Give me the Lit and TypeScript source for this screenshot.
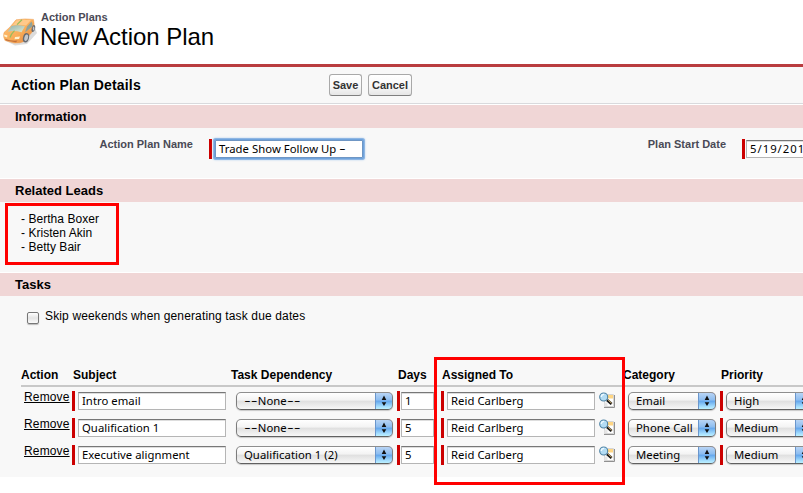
import { LitElement, html, css } from "lit";
import { customElement, property } from "lit/decorators.js";

/* Sets runs of dashes wider than the words around them. */
const dashed = (value: string) =>
  value.split(/(-+)/).map((part) => (part.startsWith("-") ? html`<span class="dash">${part}</span>` : part));

const fieldText = css`
  .text {
    font: 11.3px/16px "Noto Sans", "Open Sans", sans-serif;
    letter-spacing: var(--tracking, 0.04px);
    color: #000;
    white-space: pre;
  }
  .dash {
    display: inline-block;
    font-family: Inter, sans-serif;
    letter-spacing: -0.1px;
    font-feature-settings: "calt" 0;
    line-height: 15px;
    transform: scaleX(1.32);
    transform-origin: left;
    margin-right: 0.32em;
  }
`;

@customElement("text-field")
class TextField extends LitElement {
  @property() value = "";
  @property({ type: Boolean }) required = false;
  @property({ type: Boolean, reflect: true }) focused = false;
  static styles = [
    fieldText,
    css`
      :host { display: flex; height: 20px; }
      .bar { flex: none; width: 3px; height: 20px; background: #c00; margin-right: var(--gap, 3px); }
      .box {
        box-sizing: border-box; flex: 1; height: 18px; margin-top: 1px; padding-left: 3px;
        border: 1px solid #b5b5b5; border-top: 1px solid #777; background: #fff;
        box-shadow: inset 0 1px 0 #ddd; overflow: hidden;
      }
      :host([focused]) .box {
        border: 1px solid #6f96c4; border-radius: 1px;
        box-shadow: 0 0 0 1px #6fa3dc, 0 0 0 2px #8fb6e3, 0 0 2px 2px #a9c9ec;
      }
    `,
  ];
  render() {
    return html`${this.required ? html`<div class="bar"></div>` : ""}
      <div class="box text">${dashed(this.value)}</div>`;
  }
}

@customElement("pop-up")
class PopUp extends LitElement {
  @property() value = "";
  static styles = [
    fieldText,
    css`
      :host { display: block; height: 20px; padding-top: 1px; box-sizing: border-box; }
      .box {
        box-sizing: border-box; display: flex; height: 18px; overflow: hidden;
        border: 1px solid #7c7c7c; border-top-color: #8e8e8e; border-bottom-color: #606060; border-radius: 5px;
        background: linear-gradient(#fff 0, #f3f3f3 45%, #dfdfdf 50%, #f7f7f7 100%);
        box-shadow: 0 1px 1px #c8c8c8;
      }
      .text { flex: 1; padding-left: 7px; overflow: hidden; }
      .arrows {
        flex: none; width: 18px; margin: -1px; height: 18px; box-sizing: border-box;
        border: 1px solid #3c61a5; border-top-color: #283b9b; border-left-color: #6a96cc; border-radius: 0 5px 5px 0;
        background: linear-gradient(#b9d5f5 0, #8bbcf0 45%, #62a5ec 50%, #a5defe 85%, #bdf1ff 100%);
      }
      svg { display: block; }
    `,
  ];
  render() {
    return html`<div class="box">
      <div class="text">${dashed(this.value)}</div>
      <div class="arrows">
        <svg width="16" height="16" viewBox="0 0 16 16"><path d="M8 2.6 10.3 7H5.7zM8 13 5.7 9.2h4.6z" fill="#111" /></svg>
      </div>
    </div>`;
  }
}

const lookupIcon = html`<svg class="lookup" width="17" height="17" viewBox="0 0 17 17">
  <path d="M5.5 2.5h9v12h-9z" fill="#fff" stroke="#d5d5d5" />
  <path d="M5 15.5h10.5V3" fill="none" stroke="#909090" />
  <path d="M7 3h7v3.5H7z" fill="#ffd684" />
  <path d="M5.5 10.5h3v3.5h-3z" fill="#e6e6e6" />
  <path d="M8 8 12.6 12" stroke="#1d1d1d" stroke-width="2.8" />
  <path d="M9.2 8.2 12.6 11.2" stroke="#e0b96f" stroke-width="1" />
  <circle cx="4.7" cy="5" r="4" fill="#b3dcf4" stroke="#4f83a5" stroke-width="1.1" />
  <path d="M2.3 5A2.6 2.6 0 0 1 5.2 2.4" stroke="#effaff" stroke-width="1.4" fill="none" />
</svg>`;

const carIcon = html`<svg class="car" width="34" height="32" viewBox="0 0 34 32">
  <defs>
    <linearGradient id="body" x1="0" y1="0" x2="1" y2="1">
      <stop offset="0" stop-color="#ffc37a" /><stop offset=".55" stop-color="#f9ad58" /><stop offset="1" stop-color="#e0803a" />
    </linearGradient>
    <linearGradient id="glass" x1="0" y1="0" x2="1" y2="1">
      <stop offset="0" stop-color="#8fb2b0" /><stop offset="1" stop-color="#dfe8cf" />
    </linearGradient>
  </defs>
  <path d="M3 24 12 28.5 24 27 34 16 32 11 10 23z" fill="#8a8a8a" opacity=".3" />
  <path d="M13 2.8Q22 1.2 30.5 2.4 31.5 7 31 13L27 17.5 21 24.5Q17 26.5 11 26L2 23.5Q-.2 20 1 15.5L7 10z" fill="url(#body)" stroke="#ec9d52" stroke-width=".5" />
  <path d="M13.5 3.4Q20 2.2 28 3L23 8.5Q14 7 9.5 8.4z" fill="#ffc98a" />
  <path d="M8.4 9Q15 7.2 22 9.2L18.5 15.2Q11 13.2 4.8 14.8z" fill="url(#glass)" />
  <path d="M24 9.5 28.5 4.5Q30 6.5 29.2 9.5L22 15.5z" fill="#8fa29a" />
  <path d="M19 2.8 14 7.6M11.5 13.6Q8 17 7 20.5" stroke="#96bd5c" stroke-width="1.2" fill="none" />
  <path d="M1.3 17.5 4.5 18.5 4 20.5 1.2 19.3zM12 20 17 19.6 16 22 11.5 22.3z" fill="#fff3cf" />
  <path d="M2 21.8Q8 24.3 14.5 23.6L13 25.3 3 23.5z" fill="#c2703a" />
  <ellipse cx="23" cy="20.8" rx="3" ry="4.8" transform="rotate(14 23 20.8)" fill="#686b71" />
  <ellipse cx="23.2" cy="20.8" rx="1.8" ry="3.3" transform="rotate(14 23.2 20.8)" fill="#c4c7cb" />
  <ellipse cx="30.4" cy="11.5" rx="1.7" ry="3.6" transform="rotate(12 30.4 11.5)" fill="#686b71" />
  <ellipse cx="30.6" cy="11.5" rx=".8" ry="2.1" fill="#c4c7cb" />
</svg>`;

const leads = ["Bertha Boxer", "Kristen Akin", "Betty Bair"];
const headings = ["Action", "Subject", "Task Dependency", "Days", "Assigned To", "Category", "Priority"];
const tasks = [
  { subject: "Intro email", dependency: "--None--", days: "1", owner: "Reid Carlberg", category: "Email", priority: "High" },
  { subject: "Qualification 1", dependency: "--None--", days: "5", owner: "Reid Carlberg", category: "Phone Call", priority: "Medium" },
  { subject: "Executive alignment", dependency: "Qualification 1 (2)", days: "5", owner: "Reid Carlberg", category: "Meeting", priority: "Medium" },
];

@customElement("app-root")
class AppRoot extends LitElement {
  static styles = css`
    :host {
      display: block; position: relative; width: 803px; height: 493px; overflow: hidden;
      background: #fff; color: #000; font: 12px/14px "Liberation Sans", Arial, sans-serif;
    }
    header { display: flex; height: 64px; box-sizing: border-box; padding: 17px 0 0 3px; }
    .car { flex: none; width: 34px; margin-right: 4px; }
    .kicker { font-weight: bold; font-size: 11px; line-height: 12px; color: #4a4a56; margin-top: -6px; }
    h1 { margin: 0 0 0 -1px; font-size: 24px; line-height: 27px; font-weight: normal; letter-spacing: -0.05px; white-space: nowrap; }
    .panel { border-top: 3px solid #b93c3f; background: #f8f8f8; height: 410px; overflow: hidden; }
    .title { display: flex; align-items: center; height: 36px; border-bottom: 1px solid #d9dadd; padding-left: 11px; }
    h2 { margin: 0; width: 318px; font-size: 14px; letter-spacing: 0.16px; }
    .button {
      box-sizing: border-box; height: 22px; width: 33px; margin-right: 6px; padding: 0; border: 1px solid #a9a9a9;
      border-bottom-color: #7f7f7f; border-radius: 3px; font: bold 11px/21px "Liberation Sans", Arial, sans-serif;
      color: #333; background: linear-gradient(#fff, #f8f8f8 55%, #e6e6e6);
    }
    .wide { width: 44px; }
    h3 {
      margin: 0; height: 23px; border-top: 1px solid #fff; padding-left: 15px;
      background: #f0d6d6; background-clip: padding-box; font-size: 13px; line-height: 23px;
    }
    .form { display: grid; grid-template-columns: 193px 172px 361px 200px; height: 50px; box-sizing: border-box; padding-top: 11px; }
    .label { margin-top: -1px; text-align: right; font-weight: bold; font-size: 11px; line-height: 12px; color: #4a4a56; }
    .name { margin-left: 16px; --gap: 3px; width: 155px; box-sizing: border-box; padding-right: 1px; }
    .date { margin-left: 16px; --gap: 1px; --tracking: 1px; }
    .leads { height: 70px; box-sizing: border-box; padding: 10px 0 0 21px; margin: 0; list-style: none; letter-spacing: 0.04px; }
    .skip { display: flex; height: 20px; padding: 13px 0 0 27px; letter-spacing: 0.14px; }
    .check {
      width: 10px; height: 10px; margin: 3px 6px 0 0; border: 1px solid #777; border-radius: 2px;
      background: linear-gradient(#fff, #e4e4e4 50%, #fafafa); box-shadow: 0 1px 1px #bbb;
    }
    .table { margin: 36px 0 0 21px; width: 900px; }
    .row { display: grid; grid-template-columns: 51px 158px 167px 44px 181px 98px 110px; height: 27px; }
    .head { height: 20px; border-bottom: 2px solid #c8c8c8; margin-bottom: 4px; font-weight: bold; line-height: 20px; }
    .head span:not(:first-child) { padding-left: 1px; white-space: nowrap; }
    .remove { color: #000; padding-left: 3px; letter-spacing: 0.15px; line-height: 12px; text-underline-offset: 1px; }
    .subject { width: 154px; }
    .dependency { width: 157px; margin-left: 6px; }
    .days { width: 37px; --gap: 1px; }
    .owner { display: flex; gap: 4px; }
    .lookup { flex: none; margin-top: 1px; }
    .category { width: 88px; margin-left: 6px; }
    .priority { display: flex; gap: 3px; }
    .bar { width: 3px; height: 20px; background: #c00; }
    .priority pop-up { width: 87px; }
    .mark { position: absolute; box-sizing: border-box; border: 3px solid #f00; }
    .mark-leads { left: 5px; top: 203px; width: 114px; height: 62px; }
    .mark-owner { left: 434px; top: 357px; width: 191px; height: 128px; }
  `;

  render() {
    return html`
      <header>
        ${carIcon}
        <div>
          <div class="kicker">Action Plans</div>
          <h1>New Action Plan</h1>
        </div>
      </header>
      <main class="panel">
        <div class="title">
          <h2>Action Plan Details</h2>
          <button class="button">Save</button>
          <button class="button wide">Cancel</button>
        </div>
        <h3>Information</h3>
        <div class="form">
          <span class="label">Action Plan Name</span>
          <text-field class="name" required focused value="Trade Show Follow Up -"></text-field>
          <span class="label">Plan Start Date</span>
          <text-field class="date" required value="5/19/2010"></text-field>
        </div>
        <h3>Related Leads</h3>
        <ul class="leads">${leads.map((lead) => html`<li>- ${lead}</li>`)}</ul>
        <h3>Tasks</h3>
        <div class="skip"><span class="check"></span>Skip weekends when generating task due dates</div>
        <div class="table">
          <div class="row head">${headings.map((h) => html`<span>${h}</span>`)}</div>
          ${tasks.map(
            (t) => html`<div class="row">
              <u class="remove">Remove</u>
              <text-field class="subject" required value=${t.subject}></text-field>
              <pop-up class="dependency" value=${t.dependency}></pop-up>
              <text-field class="days" required value=${t.days}></text-field>
              <div class="owner"><text-field class="subject" required value=${t.owner}></text-field>${lookupIcon}</div>
              <pop-up class="category" value=${t.category}></pop-up>
              <div class="priority"><span class="bar"></span><pop-up value=${t.priority}></pop-up></div>
            </div>`
          )}
        </div>
      </main>
      <div class="mark mark-leads"></div>
      <div class="mark mark-owner"></div>
    `;
  }
}
